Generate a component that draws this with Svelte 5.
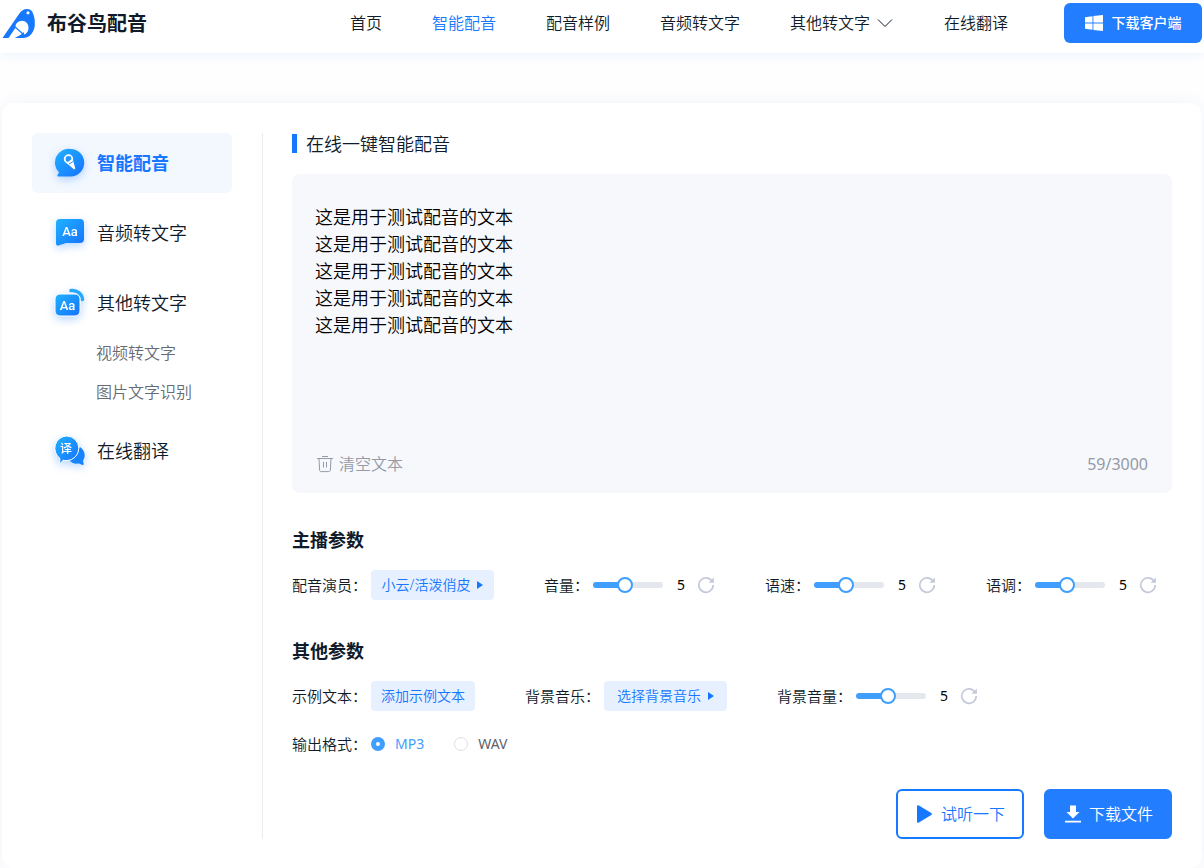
<script lang="ts">
	type Param = { id: string; label: string; value: number };

	const MAX_LENGTH = 3000;
	const DEFAULT_LEVEL = 5;

	const nav = [
		{ label: '首页' },
		{ label: '智能配音', active: true },
		{ label: '配音样例' },
		{ label: '音频转文字' },
		{ label: '其他转文字', more: true },
		{ label: '在线翻译' }
	];

	const formats = ['MP3', 'WAV'];

	let text = $state(Array(5).fill('这是用于测试配音的文本').join('\n'));
	let format = $state('MP3');
	let voice = $state<Param[]>([
		{ id: 'volume', label: '音量：', value: DEFAULT_LEVEL },
		{ id: 'speed', label: '语速：', value: DEFAULT_LEVEL },
		{ id: 'pitch', label: '语调：', value: DEFAULT_LEVEL }
	]);
	let music = $state<Param>({ id: 'music-volume', label: '背景音量：', value: DEFAULT_LEVEL });

	// levels run from 1 to 10
	const fill = (value: number) => ((value - 1) / 9) * 100;
</script>

{#snippet level(param: Param)}
	<div class="field">
		<label class="name" for={param.id}>{param.label}</label>
		<input
			class="slider"
			type="range"
			id={param.id}
			min="1"
			max="10"
			bind:value={param.value}
			style="--fill: {fill(param.value)}%"
		/>
		<output class="value" for={param.id}>{param.value}</output>
		<button class="reset" type="button" aria-label="重置" onclick={() => (param.value = DEFAULT_LEVEL)}>
			<svg viewBox="0 0 18 18" aria-hidden="true">
				<path d="M15.2 5.4A7.2 7.2 0 1 0 16.2 9" fill="none" stroke="currentColor" stroke-width="1.7" />
				<path d="M16.9 1.6v5.2h-5.4z" fill="currentColor" />
			</svg>
		</button>
	</div>
{/snippet}

<svg class="defs" aria-hidden="true">
	<defs>
		<linearGradient id="blue" x1="0" y1="0" x2="1" y2="1">
			<stop offset="0" stop-color="#1fb2ff" />
			<stop offset="1" stop-color="#1672ff" />
		</linearGradient>
	</defs>
</svg>

<header>
	<a class="logo" href="#home">
		<svg viewBox="0 0 34 30" aria-hidden="true">
			<path
				d="M.5 29 17 5C19 2 21.500 0 25 0c3 0 5.300 1.600 6 4.500C32.600 8 33 12 32.800 16c-.4 6.500-4.500 12.600-11 13h-9l5.500-3c4.500.8 8.200-2.600 8.200-7.300 0-4-2.800-6.900-6.300-6.900-4.200 0-7.200 3-6.700 7L6.500 29z"
				fill="#1677ff"
			/>
			<path d="M12.500 17.500 21.500 25.500" stroke="#1677ff" stroke-width="1.200" />
			<path d="M18 26.500l3.500-3.500 1 3.500z" fill="#1677ff" />
			<circle cx="26" cy="3.800" r="1.600" fill="#fff" />
		</svg>
		<span>布谷鸟配音</span>
	</a>
	<nav>
		{#each nav as item}
			<a href="#{item.label}" class:active={item.active}>
				{item.label}
				{#if item.more}
					<svg class="chevron" viewBox="0 0 16 10" aria-hidden="true">
						<path d="M1 1.500 8 8.500 15 1.500" fill="none" stroke="currentColor" />
					</svg>
				{/if}
			</a>
		{/each}
	</nav>
	<button class="client" type="button">
		<svg viewBox="0 0 18 16" aria-hidden="true">
			<path d="M0 2.200 7.500 1.200v6.300H0zM8.400 1.100 18 0v7.500H8.400zM0 8.500h7.500v6.300L0 13.800zM8.400 8.500H18V16l-9.600-1.100z" fill="#fff" />
		</svg>
		下载客户端
	</button>
</header>

<div class="card">
	<aside>
		<a class="item active" href="#dub">
			<svg viewBox="0 0 32 32" aria-hidden="true">
				<path d="M16.500 2a13.500 13.500 0 1 1 0 27.500H4.500c-1 0-1.500-1-.8-1.700l1.400-2.400A13.700 13.700 0 0 1 16.500 2z" fill="url(#blue)" />
				<circle cx="14.500" cy="12" r="3.800" fill="none" stroke="#fff" stroke-width="1.800" />
				<path d="M12.500 16 18.500 11.500l2.700 9.400c.2 1-.9 1.800-1.700 1.100z" fill="#fff" />
				<path d="M12 12l5-2M15 17l4-2.500" stroke="#2a97ff" stroke-width="1" />
			</svg>
			智能配音
		</a>
		<a class="item" href="#audio">
			<svg viewBox="0 0 32 32" aria-hidden="true">
				<path d="M6 2h20a4 4 0 0 1 4 4v16a4 4 0 0 1-4 4H12l-7.500 2.500A2 2 0 0 1 2 26.600V6a4 4 0 0 1 4-4z" fill="url(#blue)" />
				<text x="16" y="18.500" text-anchor="middle">Aa</text>
			</svg>
			音频转文字
		</a>
		<a class="item" href="#other">
			<svg viewBox="0 0 32 32" aria-hidden="true">
				<path d="M17 3.500c6-.8 11 3.200 11.500 9" fill="none" stroke="#27a9ff" stroke-width="3.500" stroke-linecap="round" />
				<rect x="1" y="7" width="25" height="22" rx="5" fill="url(#blue)" stroke="#fff" stroke-width="1" />
				<text x="13.500" y="22.500" text-anchor="middle">Aa</text>
			</svg>
			其他转文字
		</a>
		<ul>
			<li><a href="#video">视频转文字</a></li>
			<li><a href="#ocr">图片文字识别</a></li>
		</ul>
		<a class="item" href="#translate">
			<svg viewBox="0 0 32 32" aria-hidden="true">
				<path d="M26 12c5 3 6 9.500 3 13.500l.7 3.500c.1.800-.6 1.200-1.200.9L25 28.500c-4.500.5-7-.5-9-2.500z" fill="#1684ff" />
				<path
					d="M12.500 1a12.300 12.300 0 1 1 0 24.600c-1.200 0-2.300-.1-3.300-.5L7 28c-.8.400-1.200-.1-1.200-.8v-4A12.300 12.300 0 0 1 12.500 1z"
					fill="url(#blue)"
					stroke="#fff"
				/>
				<text class="han" x="12" y="17.500" text-anchor="middle">译</text>
			</svg>
			在线翻译
		</a>
	</aside>

	<main>
		<h1>在线一键智能配音</h1>

		<div class="editor">
			<textarea aria-label="配音文本" maxlength={MAX_LENGTH} spellcheck="false" bind:value={text}></textarea>
			<div class="tools">
				<button class="clear" type="button" onclick={() => (text = '')}>
					<svg viewBox="0 0 18 18" aria-hidden="true" fill="none" stroke="currentColor">
						<path d="M1 3.500h16M6 1.500h6M3 3.500l.6 11.500c0 1 .7 1.600 1.600 1.600h7.600c.9 0 1.600-.6 1.600-1.600L15 3.500M7.500 7v5.500M10.500 7v5.500" />
					</svg>
					清空文本
				</button>
				<span class="count">{text.length}/{MAX_LENGTH}</span>
			</div>
		</div>

		<section>
			<h2>主播参数</h2>
			<div class="row">
				<div class="field">
					<span class="name">配音演员：</span>
					<button class="pick wide" type="button">小云/活泼俏皮<i class="caret"></i></button>
				</div>
				{#each voice as param (param.id)}
					{@render level(param)}
				{/each}
			</div>
		</section>

		<section>
			<h2>其他参数</h2>
			<div class="row">
				<div class="field">
					<span class="name">示例文本：</span>
					<button class="pick" type="button">添加示例文本</button>
				</div>
				<div class="field">
					<span class="name">背景音乐：</span>
					<button class="pick wide" type="button">选择背景音乐<i class="caret"></i></button>
				</div>
				{@render level(music)}
			</div>
			<div class="row formats" role="radiogroup" aria-label="输出格式">
				<span class="name">输出格式：</span>
				{#each formats as name}
					<label class="format">
						<input type="radio" name="format" value={name} bind:group={format} />
						<span>{name}</span>
					</label>
				{/each}
			</div>
		</section>

		<div class="actions">
			<button class="action" type="button">
				<svg viewBox="0 0 18 18" aria-hidden="true">
					<path d="M2 1.500C2 .3 3 0 3.900.5l12.400 7.400c.9.500.9 1.500 0 2L3.900 17.500C3 18 2 17.600 2 16.500z" fill="currentColor" />
				</svg>
				试听一下
			</button>
			<button class="action primary" type="button">
				<svg viewBox="0 0 18 18" aria-hidden="true">
					<path d="M7 .5h6V7h3.500L10 13.500 3.500 7H7zM2 15.700h16v1.800H2z" fill="currentColor" />
				</svg>
				下载文件
			</button>
		</div>
	</main>
</div>

<style>
	:global(body) {
		margin: 0;
		background: #fefeff;
		color: #0f1b2a;
		font-family: 'Noto Sans', 'Noto Sans CJK SC', sans-serif;
		font-size: 16px;
		font-weight: 350;
		line-height: 24px;
	}
	a {
		color: inherit;
		text-decoration: none;
	}
	button {
		display: flex;
		align-items: center;
		justify-content: center;
		padding: 0;
		border: 0;
		background: none;
		color: inherit;
		font: inherit;
		white-space: nowrap;
		cursor: pointer;
	}
	svg {
		display: block;
		flex: none;
	}
	.defs {
		position: absolute;
		width: 0;
		height: 0;
	}

	header {
		display: flex;
		align-items: flex-start;
		box-sizing: border-box;
		height: 53px;
		padding: 3px 2px 0;
		background: #fff;
		box-shadow: 0 2px 10px rgba(30, 120, 220, 0.08);
	}
	.logo {
		display: flex;
		align-items: center;
		gap: 11px;
		height: 42px;
		margin-right: auto;
		font-size: 20px;
		font-weight: 700;
	}
	.logo svg {
		width: 34px;
		height: 30px;
	}
	nav {
		display: flex;
		gap: 50px;
		height: 40px;
		margin-right: 56px;
		white-space: nowrap;
	}
	nav a {
		display: flex;
		align-items: center;
	}
	nav .active {
		color: #1677ff;
	}
	.chevron {
		width: 16px;
		height: 10px;
		margin: 0 1px 0 7px;
	}
	.client {
		gap: 9px;
		width: 138px;
		height: 40px;
		border-radius: 6px;
		background: #237eff;
		color: #fff;
		font-size: 14px;
		font-weight: 500;
	}
	.client svg {
		width: 18px;
		height: 16px;
	}

	.card {
		display: flex;
		margin: 50px 2px 0;
		padding: 30px 30px 29px;
		border-radius: 12px;
		background: #fff;
		box-shadow: 0 0 16px rgba(30, 70, 160, 0.06);
	}
	aside {
		flex: none;
		width: 200px;
		padding-right: 30px;
		border-right: 1px solid #ececf0;
	}
	.item {
		display: flex;
		align-items: center;
		gap: 11px;
		height: 60px;
		margin-bottom: 10px;
		padding-left: 22px;
		border-radius: 6px;
		font-size: 18px;
	}
	.item.active {
		background: #f3f8ff;
		color: #1677ff;
		font-weight: 700;
	}
	.item svg {
		width: 32px;
		height: 32px;
		overflow: visible;
		filter: drop-shadow(0 3px 4px rgba(22, 119, 255, 0.3));
	}
	.item text {
		fill: #fff;
		font-family: Roboto, sans-serif;
		font-size: 13px;
		font-weight: 500;
	}
	.item .han {
		font-family: 'Noto Sans CJK SC', sans-serif;
		font-size: 12px;
	}
	ul {
		margin: -9px 0 9px;
		padding: 0 0 0 64px;
		list-style: none;
		color: #666c75;
	}
	li {
		line-height: 39px;
	}

	main {
		flex: 1;
		min-width: 0;
		padding-left: 29px;
	}
	h1 {
		display: flex;
		align-items: center;
		gap: 9px;
		height: 21px;
		margin: 0 0 20px;
		font-size: 18px;
		font-weight: 350;
	}
	h1::before {
		content: '';
		width: 5px;
		height: 19px;
		background: #1677ff;
	}
	.editor {
		margin-bottom: 35px;
		padding: 30px 24px 17px 23px;
		border-radius: 8px;
		background: #f6f8fc;
	}
	textarea {
		display: block;
		box-sizing: border-box;
		width: 100%;
		height: 248px;
		padding: 0;
		border: 0;
		outline: 0;
		background: none;
		color: #000;
		font: inherit;
		font-size: 18px;
		line-height: 27px;
		resize: none;
	}
	.tools {
		display: flex;
		align-items: center;
		justify-content: space-between;
		height: 24px;
		color: #949aa8;
	}
	.count {
		font-weight: 400;
	}
	.clear {
		gap: 5px;
		padding-left: 1px;
	}
	.clear svg,
	.reset svg,
	.action svg {
		width: 18px;
		height: 18px;
	}

	section + section {
		margin-top: 39px;
	}
	h2 {
		margin: 0 0 18px;
		font-size: 18px;
		font-weight: 700;
		line-height: 24px;
	}
	.row {
		display: flex;
		align-items: center;
		gap: 50px;
		height: 30px;
		font-size: 15px;
		white-space: nowrap;
	}
	.field {
		display: flex;
		align-items: center;
	}
	.name {
		margin-right: 4px;
	}
	.pick {
		gap: 7px;
		height: 30px;
		padding: 0 10px;
		border-radius: 4px;
		background: #e7f0ff;
		color: #1677ff;
		font-size: 14px;
	}
	.pick.wide {
		box-sizing: border-box;
		min-width: 123px;
		padding: 0;
	}
	.caret {
		border: solid transparent;
		border-width: 4px 0 4px 6px;
		border-left-color: #1677ff;
	}
	.slider {
		width: 70px;
		height: 6px;
		margin: 0;
		border-radius: 3px;
		background: linear-gradient(to right, #409eff var(--fill), #e4e7ed var(--fill));
		appearance: none;
		cursor: pointer;
	}
	.slider::-webkit-slider-thumb {
		box-sizing: border-box;
		width: 16px;
		height: 16px;
		border: 2px solid #409eff;
		border-radius: 50%;
		background: #fff;
		appearance: none;
	}
	.value {
		min-width: 10px;
		margin: 0 11px 0 13px;
		color: #000;
		font-size: 14px;
		font-weight: 400;
		text-align: center;
	}
	.reset {
		color: #c5cadb;
	}
	.formats {
		gap: 30px;
		margin-top: 18px;
	}
	.formats .name {
		margin-right: -26px;
	}
	.format {
		display: flex;
		align-items: center;
		gap: 10px;
		color: #606266;
		font-size: 14px;
		font-weight: 400;
		cursor: pointer;
	}
	.format input {
		box-sizing: border-box;
		width: 14px;
		height: 14px;
		margin: 0;
		border: 1px solid #dcdfe6;
		border-radius: 50%;
		background: #fff;
		appearance: none;
	}
	.format input:checked {
		border: 5px solid #409eff;
	}
	.format input:checked + span {
		color: #409eff;
	}

	.actions {
		display: flex;
		justify-content: flex-end;
		gap: 20px;
		margin-top: 30px;
	}
	.action {
		gap: 8px;
		box-sizing: border-box;
		width: 128px;
		height: 50px;
		border: 2px solid #1677ff;
		border-radius: 6px;
		background: #fff;
		color: #1677ff;
	}
	.action.primary {
		border-color: #237eff;
		background: #237eff;
		color: #fff;
	}
</style>
